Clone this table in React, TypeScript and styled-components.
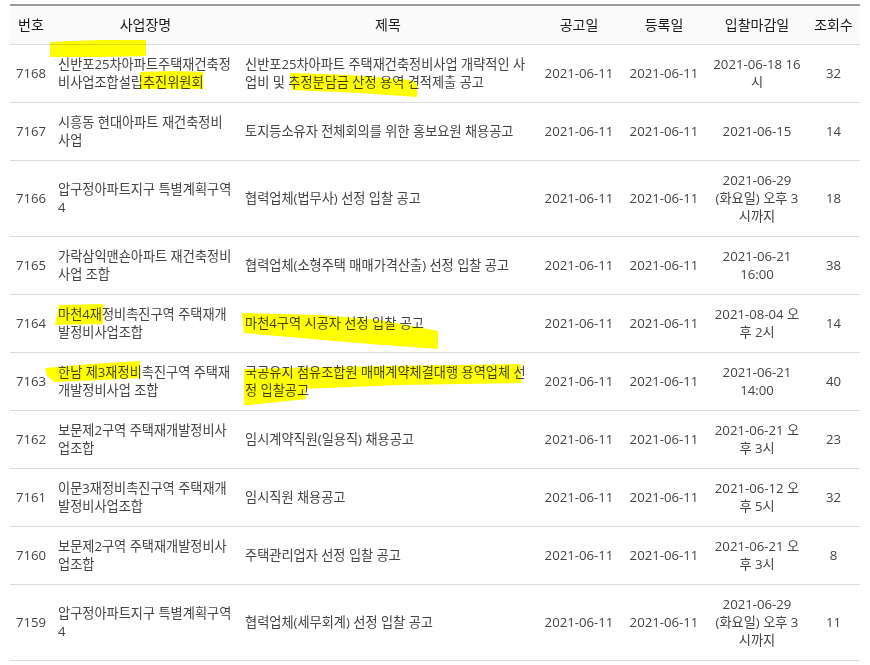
import React from "react";
import styled, { createGlobalStyle } from "styled-components";

const Global = createGlobalStyle`
  html, body { margin: 0; padding: 0; background: #fff; }
  body { font-family: "Open Sans", "Noto Sans CJK KR", sans-serif; }
`;

const Page = styled.div`
  position: relative;
  width: 870px;
  padding: 4px 10px 0;
  box-sizing: border-box;
`;

const Table = styled.table`
  width: 850px;
  border-collapse: collapse;
  table-layout: fixed;
  border-top: 2px solid #9a9a9a;
`;

const Th = styled.th`
  padding: 10px 5px;
  font-size: 14px;
  line-height: 18px;
  font-weight: 400;
  color: #1a1a1a;
  background: #fafafa;
  border-bottom: 1px solid #dcdcdc;
  text-align: center;
  white-space: nowrap;
`;

const Td = styled.td<{ $align?: "left" | "center" }>`
  padding: 10px 5px 11px;
  font-size: 13.2px;
  line-height: 18px;
  color: #444;
  border-bottom: 1px solid #dcdcdc;
  text-align: ${(p) => p.$align ?? "center"};
  padding-left: ${(p) => (p.$align === "left" ? "6px" : "5px")};
  vertical-align: middle;
`;

const Line = styled.span`
  display: block;
  white-space: nowrap;
`;

const Marker = styled.svg`
  position: absolute;
  left: 0;
  top: 0;
  width: 870px;
  height: 665px;
  pointer-events: none;
  mix-blend-mode: multiply;
`;

type Row = {
  no: string;
  site: string[];
  title: string[];
  posted: string;
  reg: string;
  due: string[];
  views: string;
};

const rows: Row[] = [
  {
    no: "7168",
    site: ["신반포25차아파트주택재건축정", "비사업조합설립추진위원회"],
    title: ["신반포25차아파트 주택재건축정비사업 개략적인 사", "업비 및 추정분담금 산정 용역 견적제출 공고"],
    posted: "2021-06-11",
    reg: "2021-06-11",
    due: ["2021-06-18 16", "시"],
    views: "32",
  },
  {
    no: "7167",
    site: ["시흥동 현대아파트 재건축정비", "사업"],
    title: ["토지등소유자 전체회의를 위한 홍보요원 채용공고"],
    posted: "2021-06-11",
    reg: "2021-06-11",
    due: ["2021-06-15"],
    views: "14",
  },
  {
    no: "7166",
    site: ["압구정아파트지구 특별계획구역", "4"],
    title: ["협력업체(법무사) 선정 입찰 공고"],
    posted: "2021-06-11",
    reg: "2021-06-11",
    due: ["2021-06-29", "(화요일) 오후 3", "시까지"],
    views: "18",
  },
  {
    no: "7165",
    site: ["가락삼익맨숀아파트 재건축정비", "사업 조합"],
    title: ["협력업체(소형주택 매매가격산출) 선정 입찰 공고"],
    posted: "2021-06-11",
    reg: "2021-06-11",
    due: ["2021-06-21", "16:00"],
    views: "38",
  },
  {
    no: "7164",
    site: ["마천4재정비촉진구역 주택재개", "발정비사업조합"],
    title: ["마천4구역 시공자 선정 입찰 공고"],
    posted: "2021-06-11",
    reg: "2021-06-11",
    due: ["2021-08-04 오", "후 2시"],
    views: "14",
  },
  {
    no: "7163",
    site: ["한남 제3재정비촉진구역 주택재", "개발정비사업 조합"],
    title: ["국공유지 점유조합원 매매계약체결대행 용역업체 선", "정 입찰공고"],
    posted: "2021-06-11",
    reg: "2021-06-11",
    due: ["2021-06-21", "14:00"],
    views: "40",
  },
  {
    no: "7162",
    site: ["보문제2구역 주택재개발정비사", "업조합"],
    title: ["임시계약직원(일용직) 채용공고"],
    posted: "2021-06-11",
    reg: "2021-06-11",
    due: ["2021-06-21 오", "후 3시"],
    views: "23",
  },
  {
    no: "7161",
    site: ["이문3재정비촉진구역 주택재개", "발정비사업조합"],
    title: ["임시직원 채용공고"],
    posted: "2021-06-11",
    reg: "2021-06-11",
    due: ["2021-06-12 오", "후 5시"],
    views: "32",
  },
  {
    no: "7160",
    site: ["보문제2구역 주택재개발정비사", "업조합"],
    title: ["주택관리업자 선정 입찰 공고"],
    posted: "2021-06-11",
    reg: "2021-06-11",
    due: ["2021-06-21 오", "후 3시"],
    views: "8",
  },
  {
    no: "7159",
    site: ["압구정아파트지구 특별계획구역", "4"],
    title: ["협력업체(세무회계) 선정 입찰 공고"],
    posted: "2021-06-11",
    reg: "2021-06-11",
    due: ["2021-06-29", "(화요일) 오후 3", "시까지"],
    views: "11",
  },
];

const widths = [42, 187, 298, 84, 86, 100, 53];
const heads = ["번호", "사업장명", "제목", "공고일", "등록일", "입찰마감일", "조회수"];

const Lines = ({ items }: { items: string[] }) => (
  <>
    {items.map((t, i) => (
      <Line key={i}>{t}</Line>
    ))}
  </>
);

const highlights = [
  "50,42 70,41 100,40 146,40 146,56 100,57 50,57",
  "140,72 172,71 203,72 203,89 170,89 140,89",
  "290,73 350,75 410,80 417,84 417,97 360,93 292,90",
  "59,305 103,304 103,324 55,325",
  "242,313 320,315 380,320 438,331 438,349 370,344 300,338 244,333",
  "45,368 90,364 140,361 140,378 100,380 55,382 47,376",
  "244,369 380,366 521,364 521,383 400,385 300,389 244,390",
  "244,388 305,388 306,399 250,405 244,405",
];

export default function App() {
  return (
    <>
      <Global />
      <Page>
        <Table>
          <colgroup>
            {widths.map((w, i) => (
              <col key={i} style={{ width: w }} />
            ))}
          </colgroup>
          <thead>
            <tr>
              {heads.map((h) => (
                <Th key={h}>{h}</Th>
              ))}
            </tr>
          </thead>
          <tbody>
            {rows.map((r) => (
              <tr key={r.no}>
                <Td>{r.no}</Td>
                <Td $align="left">
                  <Lines items={r.site} />
                </Td>
                <Td $align="left">
                  <Lines items={r.title} />
                </Td>
                <Td>{r.posted}</Td>
                <Td>{r.reg}</Td>
                <Td>
                  <Lines items={r.due} />
                </Td>
                <Td>{r.views}</Td>
              </tr>
            ))}
          </tbody>
        </Table>
        <Marker viewBox="0 0 870 665">
          {highlights.map((p, i) => (
            <polygon key={i} points={p} fill="#ffff00" />
          ))}
        </Marker>
      </Page>
    </>
  );
}
